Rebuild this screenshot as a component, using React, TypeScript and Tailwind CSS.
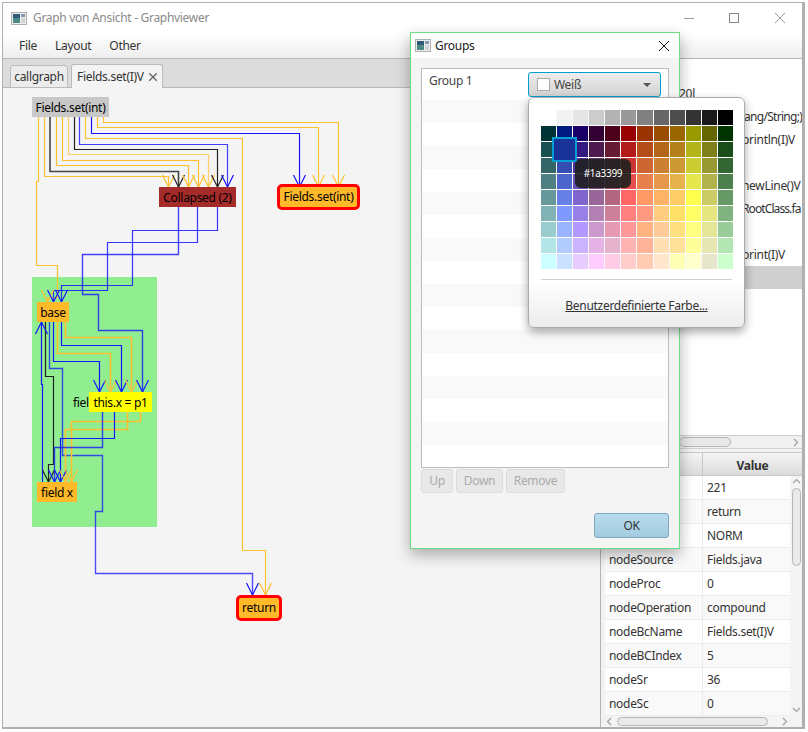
const ORANGE = "#ffc030";
const BLUE = "#1414ff";
const DARK = "#222222";

// edge path plus arrow tips
const edges: { d: string; color: string; w?: number; op?: number }[] = [
  { d: "M38.5 117V181.5H36.5V265.5H57.5V298H47.5V302", color: ORANGE, w: 1.2 },
  { d: "M44.5 117V176.5H168.5V187", color: ORANGE, w: 1.2 },
  { d: "M50 117V171.5H178.5V187", color: "#444444", w: 1.6 },
  { d: "M56.5 117V165.5H188.5V187", color: ORANGE, w: 1.2 },
  { d: "M62.5 117V160.5H198.5V187", color: ORANGE, w: 1.2 },
  { d: "M68.5 117V154.5H208.5V187", color: ORANGE, op: 0.7, w: 1.2 },
  { d: "M74.5 117V149.5H217.5V187", color: DARK, w: 1.2 },
  { d: "M79.5 117V144.5H227.5V187", color: BLUE, op: 0.8, w: 1.2 },
  { d: "M85.5 117V138.5H242.5V550.5H265.5V595", color: ORANGE, w: 1.2 },
  { d: "M91.5 117V133.5H299.5V187", color: BLUE, w: 1.2 },
  { d: "M97.5 117V127.5H318.5V187", color: ORANGE, w: 1.2 },
  { d: "M103.5 117V122.5H338.5V187", color: ORANGE, w: 1.2 },
  { d: "M178.5 207V254.5H82.5V294.5H98.5V330.5H142.5V392", color: BLUE, w: 1.4, op: 0.8 },
  { d: "M197.5 207V242.5H107.5V290.5H53.5V302", color: BLUE, w: 1.2, op: 0.85 },
  { d: "M217.5 207V230.5H132.5V285.5H61.5V302", color: BLUE, w: 1.2, op: 0.85 },
  { d: "M65.5 322V337.5H131.5V392", color: ORANGE, w: 1.6 },
  { d: "M61.5 322V345.5H121.5V392", color: BLUE, w: 1.2 },
  { d: "M57.5 322V353.5H110.5V392", color: ORANGE, w: 1.6 },
  { d: "M53.5 322V361.5H99.5V392", color: BLUE, w: 1.2 },
  { d: "M49.5 322V368.5H62.5V455.5H102.5V511.5H95.5V573.5H252.5V595", color: BLUE, w: 1.4, op: 0.75 },
  { d: "M45.5 322V376.5H53.5V464.5H48.5V482", color: DARK, w: 1.2 },
  { d: "M42.5 482V384.5H41.5V322", color: BLUE, w: 1.2 },
  { d: "M140.5 412V421.5H71.5V482", color: ORANGE, w: 1.6 },
  { d: "M127.5 412V429.5H65.5V482", color: ORANGE, w: 1.6 },
  { d: "M114.5 412V438.5H60.5V482", color: BLUE, w: 1.2 },
  { d: "M102.5 412V447.5H54.5V482", color: BLUE, w: 1.4, op: 0.8 },
];

const arrows: { x: number; y: number; color: string; up?: boolean }[] = [
  { x: 47.5, y: 302, color: ORANGE },
  { x: 168.5, y: 187, color: ORANGE },
  { x: 178.5, y: 187, color: DARK },
  { x: 188.5, y: 187, color: ORANGE },
  { x: 198.5, y: 187, color: ORANGE },
  { x: 208.5, y: 187, color: ORANGE },
  { x: 217.5, y: 187, color: DARK },
  { x: 227.5, y: 187, color: BLUE },
  { x: 299.5, y: 187, color: BLUE },
  { x: 318.5, y: 187, color: ORANGE },
  { x: 338.5, y: 187, color: ORANGE },
  { x: 265.5, y: 595, color: ORANGE },
  { x: 252.5, y: 595, color: BLUE },
  { x: 53.5, y: 302, color: BLUE },
  { x: 61.5, y: 302, color: BLUE },
  { x: 99.5, y: 392, color: BLUE },
  { x: 110.5, y: 392, color: ORANGE },
  { x: 121.5, y: 392, color: BLUE },
  { x: 131.5, y: 392, color: ORANGE },
  { x: 142.5, y: 392, color: BLUE },
  { x: 48.5, y: 482, color: DARK },
  { x: 54.5, y: 482, color: BLUE },
  { x: 60.5, y: 482, color: BLUE },
  { x: 65.5, y: 482, color: ORANGE },
  { x: 71.5, y: 482, color: ORANGE },
  { x: 41.5, y: 322, color: BLUE, up: true },
];

const palette = [
  ["#ffffff", "#f2f2f2", "#e6e6e6", "#cccccc", "#b3b3b3", "#999999", "#808080", "#666666", "#4d4d4d", "#333333", "#1a1a1a", "#000000"],
  ["#003333", "#001a80", "#1a0066", "#330033", "#4d001a", "#990000", "#993300", "#994d00", "#996600", "#999900", "#666600", "#003300"],
  ["#1a5151", "#1a3399", "#331a80", "#4d1a4d", "#661a33", "#b31a1a", "#b34d1a", "#b3661a", "#b3801a", "#b3b31a", "#80801a", "#1a4d1a"],
  ["#336666", "#334db3", "#4d3399", "#663366", "#80334d", "#cc3333", "#cc6633", "#cc8033", "#cc9933", "#cccc33", "#999933", "#336633"],
  ["#4d8080", "#4d66cc", "#664db3", "#804d80", "#994d66", "#e64d4d", "#e6804d", "#e6994d", "#e6b34d", "#e6e64d", "#b3b34d", "#4d804d"],
  ["#669999", "#6680e6", "#8066cc", "#996699", "#b36680", "#ff6666", "#ff9966", "#ffb366", "#ffcc66", "#ffff4d", "#cccc66", "#669966"],
  ["#80b3b3", "#8099ff", "#9980e6", "#b380b3", "#cc8099", "#ff8080", "#ff9980", "#ffcc80", "#ffe066", "#ffff66", "#e6e680", "#80b380"],
  ["#99cccc", "#99b3ff", "#b399ff", "#cc99cc", "#e699b3", "#ff9999", "#ffb380", "#ffcc99", "#ffe080", "#ffff80", "#e6e699", "#99cc99"],
  ["#b3e6e6", "#b3ccff", "#ccb3ff", "#e6b3e6", "#e6b3cc", "#ffb3b3", "#ffb399", "#ffe0b3", "#ffe099", "#ffff99", "#e6e6b3", "#b3e6b3"],
  ["#ccffff", "#cce0ff", "#e6ccff", "#ffccff", "#ffcce6", "#ffcccc", "#ffccb3", "#ffe6cc", "#ffffb3", "#ffffcc", "#e6e6cc", "#ccffcc"],
];

const listRows = [
  { text: "", cls: "pl-0" },
  { text: "20l", cls: "pl-[74px]" },
  { text: "ang/String;)", cls: "pl-[139px] tracking-[-0.7px]" },
  { text: "println(I)V", cls: "pl-[137px]" },
  { text: "", cls: "pl-0" },
  { text: "newLine()V", cls: "pl-[137px]" },
  { text: "RootClass.fa", cls: "pl-[137px] tracking-[-0.9px]" },
  { text: "", cls: "pl-0" },
  { text: "print(I)V", cls: "pl-[137px]" },
];

const props = [
  ["", "221"],
  ["", "return"],
  ["", "NORM"],
  ["nodeSource", "Fields.java"],
  ["nodeProc", "0"],
  ["nodeOperation", "compound"],
  ["nodeBcName", "Fields.set(I)V"],
  ["nodeBCIndex", "5"],
  ["nodeSr", "36"],
  ["nodeSc", "0"],
];

function AppIcon() {
  return (
    <svg width="16" height="13" viewBox="0 0 16 13" aria-hidden="true" className="shrink-0">
      <rect x="0.5" y="0.5" width="15" height="12" fill="#ececec" stroke="#b0b0b0" />
      <rect x="2" y="2" width="7" height="9" fill="#4d8a86" />
      <rect x="2" y="2" width="7" height="4" fill="#2f5a78" />
      <rect x="10" y="2" width="4" height="3" fill="#8098b4" />
      <rect x="10" y="6" width="4" height="5" fill="#d3d5d8" />
    </svg>
  );
}

function CloseGlyph({ size, color, width = 1 }: { size: number; color: string; width?: number }) {
  return (
    <svg width={size} height={size} viewBox={`0 0 ${size} ${size}`} fill="none" stroke={color} strokeWidth={width} aria-hidden="true" className="shrink-0">
      <path d={`M0 0L${size} ${size}M${size} 0L0 ${size}`} />
    </svg>
  );
}

function Chevron({ dir }: { dir: "up" | "down" | "left" | "right" }) {
  const paths = {
    up: "M1 5l3.5-3.5L8 5",
    down: "M1 2l3.5 3.5L8 2",
    left: "M5 1L1.5 4.5 5 8",
    right: "M2 1l3.5 3.5L2 8",
  };
  return (
    <svg width="9" height="9" viewBox="0 0 9 9" fill="none" stroke="#a0a0a0" strokeWidth="1.2" aria-hidden="true">
      <path d={paths[dir]} />
    </svg>
  );
}

function Graph() {
  return (
    <div className="relative flex-1 bg-[#f4f4f4] overflow-hidden text-[12px]">
      <div className="absolute left-[29px] top-[189px] w-[125px] h-[250px] bg-[#90ee90]" />
      <svg className="absolute left-[-3px] top-[-88px]" width="400" height="720" fill="none" aria-hidden="true">
        {edges.map((e) => (
          <path key={e.d} d={e.d} stroke={e.color} strokeWidth={e.w ?? 1} opacity={e.op ?? 1} />
        ))}
        {arrows.map((a) => (
          <path
            key={`${a.x}-${a.y}`}
            d={`M${a.x - 6} ${a.up ? a.y + 12 : a.y - 12}L${a.x} ${a.y}L${a.x + 6} ${a.up ? a.y + 12 : a.y - 12}`}
            stroke={a.color}
            strokeWidth={1.2}
          />
        ))}
      </svg>
      <div className="absolute left-[29px] top-[9px] w-[77px] h-[20px] pt-px bg-[#c8c8c8] flex items-center justify-center text-black">Fields.set(int)</div>
      <div className="absolute left-[156px] top-[99px] w-[77px] h-[20px] pt-px bg-[#a52a2a] flex items-center justify-center text-black">Collapsed (2)</div>
      <div className="absolute left-[274px] top-[96px] w-[83px] h-[26px] bg-[#ffb929] border-[3px] border-[#ff0000] rounded-[5px] flex items-center justify-center text-black">Fields.set(int)</div>
      <div className="absolute left-[34px] top-[214px] w-[32px] h-[20px] pt-px bg-[#ffb929] flex items-center justify-center text-black">base</div>
      <div className="absolute left-[34px] top-[394px] w-[40px] h-[20px] pt-px bg-[#ffb929] flex items-center justify-center text-black">field x</div>
      <div className="absolute left-[70px] top-[304px] h-[20px] pt-px flex items-center text-black">fiel</div>
      <div className="absolute left-[86px] top-[304px] w-[63px] h-[20px] pt-px bg-[#ffff00] flex items-center justify-center text-black">this.x = p1</div>
      <div className="absolute left-[233px] top-[507px] w-[46px] h-[26px] bg-[#ffb929] border-[3px] border-[#ff0000] rounded-[5px] flex items-center justify-center text-black">return</div>
    </div>
  );
}

function ColorPopup() {
  return (
    <div className="absolute left-[528px] top-[97px] w-[217px] h-[231px] rounded-[6px] border border-[#ababab] bg-gradient-to-b from-white from-80% to-[#ececec] shadow-[0_4px_10px_rgba(0,0,0,0.35)] px-[12px] pt-[12px] flex flex-col">
      <div className="relative w-[192px]">
        <div className="flex flex-col gap-px">
          {palette.map((row) => (
            <div key={row[0]} className="grid grid-cols-12 gap-px bg-[#f8f8f8]">
              {row.map((c) => (
                <div key={c} className="h-[15px]" style={{ backgroundColor: c }} />
              ))}
            </div>
          ))}
        </div>
        <div className="absolute left-[11px] top-[27px] w-[25px] h-[25px] bg-[#1a3399] border-2 border-[#039ed3]" />
        <div className="absolute left-[34px] top-[49px] w-[56px] h-[29px] rounded-[6px] bg-[#1f1f1f]/90 flex items-center justify-center text-white text-[10px]">#1a3399</div>
      </div>
      <div className="mt-[10px] h-px bg-[#d2d2d2]" />
      <div className="mt-[17px] text-center text-[#333] underline">Benutzerdefinierte Farbe...</div>
    </div>
  );
}

function GroupsDialog() {
  return (
    <div className="absolute left-[410px] top-[32px] w-[270px] h-[517px] border border-[#6ddc85] bg-[#f4f4f4] shadow-[0_6px_14px_rgba(0,0,0,0.3)] flex flex-col">
      <div className="h-[25px] bg-white flex items-center pl-[4px] pr-[10px] shrink-0">
        <AppIcon />
        <span className="ml-[4px] text-[#222] text-[12px]">Groups</span>
        <span className="ml-auto flex"><CloseGlyph size={10} color="#111" /></span>
      </div>
      <div className="flex-1 flex flex-col px-[10px] pt-[10px] pb-[10px]">
        <div className="h-[400px] border border-[#bdbdbd] bg-white overflow-hidden">
          <div className="h-[31px] flex items-start justify-between pl-[7px] pr-[7px]">
            <span className="mt-[3px] text-[#444]">Group 1</span>
            <div className="mt-[3px] w-[133px] h-[25px] rounded-[3px] border border-[#039ed3] bg-gradient-to-b from-[#eeeeee] to-[#d2d2d2] flex items-center pl-[8px] pr-[9px] text-[#444]">
              <span className="w-[13px] h-[13px] bg-white border border-[#aaa]" />
              <span className="ml-[4px]">Weiß</span>
              <span className="ml-auto w-0 h-0 border-x-[4px] border-x-transparent border-t-[4px] border-t-[#555]" />
            </div>
          </div>
          {Array.from({ length: 16 }, (_, i) => (
            <div key={i} className={i % 2 === 0 ? "h-[23px] bg-[#f9f9f9]" : "h-[23px] bg-white"} />
          ))}
        </div>
        <div className="mt-[1px] flex gap-[3px] text-[#aaa]">
          <div className="h-[24px] w-[32px] rounded-[3px] border border-[#dcdcdc] bg-[#e8e8e8] flex items-center justify-center">Up</div>
          <div className="h-[24px] w-[47px] rounded-[3px] border border-[#dcdcdc] bg-[#e8e8e8] flex items-center justify-center">Down</div>
          <div className="h-[24px] w-[59px] rounded-[3px] border border-[#dcdcdc] bg-[#e8e8e8] flex items-center justify-center">Remove</div>
        </div>
        <div className="mt-auto self-end h-[25px] w-[75px] rounded-[3px] border border-[#7fa8bd] bg-gradient-to-b from-[#b9dcee] to-[#a3cbe0] flex items-center justify-center text-[#333]">OK</div>
      </div>
    </div>
  );
}

export default function App() {
  return (
    <div className="relative w-[808px] h-[732px] bg-white overflow-hidden text-[12px] tracking-[-0.3px] font-['Noto_Sans',sans-serif]">
      <div className="ml-[2px] mt-[2px] w-[803px] h-[727px] border-[#b0b0b0] border-t border-l-[1.5px] border-r-[3px] border-b-2 bg-white flex flex-col">
        <div className="h-[30px] flex items-center pl-[8px] shrink-0 text-[#8a8a8a]">
          <AppIcon />
          <span className="ml-[6px]">Graph von Ansicht - Graphviewer</span>
          <div className="ml-auto w-[10px] h-px bg-[#999]" />
          <div className="ml-[35px] w-[10px] h-[10px] border border-[#888]" />
          <span className="ml-[36px] mr-[17px] flex"><CloseGlyph size={10} color="#999" /></span>
        </div>
        <div className="h-[26px] shrink-0 flex items-center gap-[18px] pl-[16px] pt-px bg-gradient-to-b from-white to-[#eeeeee] border-b border-[#b5b5b5] text-[#333]">
          <span>File</span>
          <span>Layout</span>
          <span>Other</span>
        </div>
        <div className="flex-1 flex min-h-0">
          <div className="w-[598px] flex flex-col border-r border-[#b5b5b5]">
            <div className="h-[29px] shrink-0 bg-[#dcdcdc] border-b border-[#b8b8b8] flex items-end pl-[7px] gap-[3px] text-[#333]">
              <div className="h-[23px] w-[58px] mb-[-1px] rounded-t-[3px] border border-[#bbb] bg-[#ececec] flex items-center justify-center">callgraph</div>
              <div className="h-[24px] w-[92px] mb-[-1px] rounded-t-[3px] border border-b-0 border-[#bbb] bg-[#f4f4f4] flex items-center pl-[5px] gap-[5px]">
                <span>Fields.set(I)V</span>
                <CloseGlyph size={8} color="#666" width={1.3} />
              </div>
            </div>
            <Graph />
          </div>
          <div className="flex-1 flex flex-col bg-[#f2f2f2] pl-[4px] min-w-0">
            <div className="h-[376px] bg-white overflow-hidden text-[#333]">
              {listRows.map((r, i) => (
                <div key={i} className={`h-[23px] flex items-center whitespace-nowrap ${r.cls}`}>{r.text}</div>
              ))}
              <div className="h-[23px] bg-[#cfcfcf]" />
            </div>
            <div className="h-[14px] flex items-center bg-[#f0f0f0] border-y border-[#d0d0d0]">
              <div className="ml-[74px] w-[52px] h-[10px] rounded-full border border-[#b5b5b5] bg-[#e8e8e8]" />
              <span className="ml-auto mr-[1px] flex"><Chevron dir="right" /></span>
            </div>
            <div className="h-[3px]" />
            <div className="flex h-[24px] border-y border-[#c8c8c8] bg-gradient-to-b from-[#f4f4f4] to-[#dcdcdc] font-bold text-[#333]">
              <div className="w-[98px] border-r border-[#c8c8c8]" />
              <div className="flex-1 flex items-center justify-center pt-[3px]">Value</div>
            </div>
            <div className="flex flex-1 min-h-0">
              <div className="flex-1 flex flex-col text-[#333]">
                {props.map(([k, v], i) => (
                  <div key={i} className={i % 2 === 0 ? "flex h-[24px] bg-white" : "flex h-[24px] bg-[#f9f9f9]"}>
                    <div className="w-[98px] pl-[4px] pt-px border-r border-b border-[#ececec] flex items-center">{k}</div>
                    <div className="flex-1 pl-[4px] pt-px border-b border-[#ececec] flex items-center">{v}</div>
                  </div>
                ))}
              </div>
              <div className="w-[12px] bg-[#f4f4f4] flex flex-col items-center pt-[2px]">
                <Chevron dir="up" />
                <div className="mt-[1px] w-[9px] h-[78px] rounded-full border border-[#b5b5b5] bg-[#eaeaea]" />
                <div className="mt-auto mb-[1px]"><Chevron dir="down" /></div>
              </div>
            </div>
            <div className="h-[11px] flex items-center bg-[#f4f4f4] pl-[1px] pr-[12px]">
              <Chevron dir="left" />
              <div className="ml-[2px] w-[151px] h-[9px] rounded-full border border-[#b5b5b5] bg-[#eaeaea]" />
              <span className="ml-auto flex"><Chevron dir="right" /></span>
            </div>
          </div>
        </div>
      </div>
      <GroupsDialog />
      <ColorPopup />
    </div>
  );
}
